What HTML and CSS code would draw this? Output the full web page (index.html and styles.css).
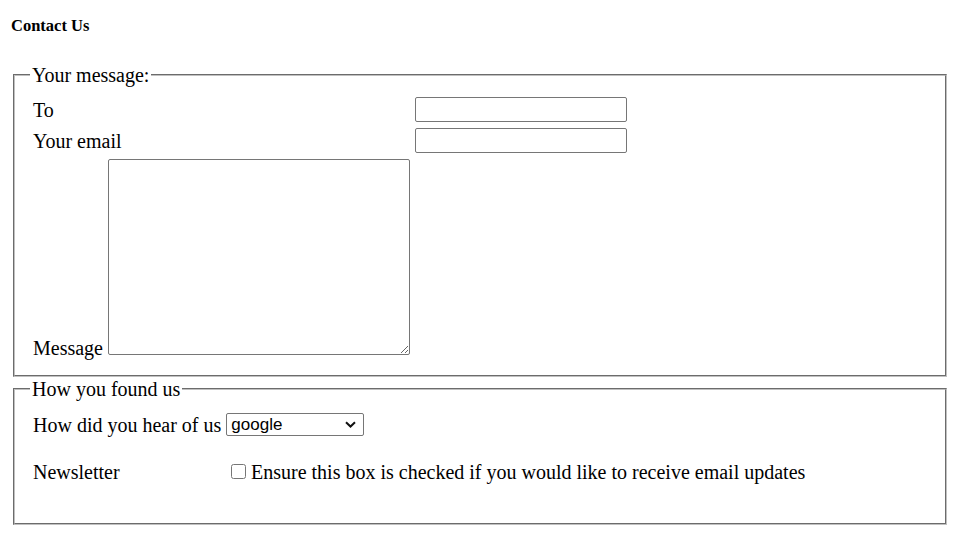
FILE: index.html
```html
<!DOCTYPE html>
<html lang="en">
<head>
<meta charset="utf-8">
<title>Contact Us</title>
<link rel="stylesheet" href="styles.css">
</head>
<body>
<h1 class="title">Contact Us</h1>
<form class="form">
  <fieldset class="group group-message">
    <legend class="legend">Your message:</legend>
    <div class="row">
      <label class="label label-wide" for="to">To</label>
      <input class="text-input" type="text" id="to">
    </div>
    <div class="row">
      <label class="label label-wide" for="email">Your email</label>
      <input class="text-input" type="text" id="email">
    </div>
    <div class="row-inline">
      <label class="label" for="message">Message</label> <textarea class="textarea" id="message"></textarea>
    </div>
  </fieldset>
  <fieldset class="group group-found">
    <legend class="legend">How you found us</legend>
    <div class="row row-select">
      <label class="label" for="hear">How did you hear of us</label>
      <span class="select-wrap">
        <select class="select" id="hear">
          <option>google</option>
          <option>friend</option>
          <option>other</option>
        </select>
        <svg class="chevron" width="11" height="7" viewBox="0 0 11 7" aria-hidden="true"><path d="M1 1.2 L5.5 5.5 L10 1.2" fill="none" stroke="#111" stroke-width="2"/></svg>
      </span>
    </div>
    <div class="row row-news">
      <span class="label label-news">Newsletter</span>
      <input class="checkbox" type="checkbox" id="news">
      <label class="label" for="news">Ensure this box is checked if you would like to receive email updates</label>
    </div>
  </fieldset>
</form>
</body>
</html>
```

FILE: styles.css
```css
html, body {
  margin: 0;
  padding: 0;
  background: #fff;
}

body {
  font-family: "Liberation Serif", "Times New Roman", serif;
  font-size: 20px;
  color: #000;
}

.title {
  font-size: 16.5px;
  font-weight: bold;
  margin: 17px 11px 0;
  line-height: 18px;
}

.form {
  margin: 29px 13px 0;
}

.group {
  margin: 0;
  border: 2px groove rgb(192, 192, 192);
  padding: 0 18px;
  min-width: 0;
}

.group-message {
  padding-top: 11px;
  padding-bottom: 16px;
}

.group-found {
  margin-top: 1px;
  padding-top: 13px;
  padding-bottom: 40px;
}

.legend {
  padding: 0 2px;
  line-height: 22px;
  margin-left: -3px;
}

.row {
  display: flex;
  align-items: center;
}

.row + .row {
  margin-top: 6px;
}

.label {
  line-height: 22px;
}

.label-wide {
  width: 382px;
  flex: none;
}

.text-input {
  width: 212px;
  height: 25px;
  box-sizing: border-box;
  margin: 0;
  border: 1px solid #767676;
  border-radius: 2px;
  font-size: 16px;
}

.row-inline {
  margin-top: 6px;
  line-height: 22px;
}

.textarea {
  width: 302px;
  height: 196px;
  box-sizing: border-box;
  margin: 0;
  border: 1px solid #767676;
  border-radius: 2px;
  vertical-align: baseline;
  font-size: 16px;
}

.row-select {
  height: 23px;
  gap: 5px;
}

.select-wrap {
  position: relative;
  display: inline-flex;
}

.select {
  -webkit-appearance: none;
  appearance: none;
  width: 138px;
  height: 23px;
  box-sizing: border-box;
  margin: 0;
  padding: 0 20px 0 4px;
  font-family: "Liberation Sans", Arial, sans-serif;
  font-size: 17px;
  line-height: 21px;
  border: 1px solid #767676;
  border-radius: 2px;
  background: #fff;
  color: #000;
}

.chevron {
  position: absolute;
  right: 8px;
  top: 8px;
  pointer-events: none;
}

.row-news {
  margin-top: 25px !important;
  height: 22px;
}

.label-news {
  width: 194px;
  flex: none;
}

.checkbox {
  width: 15px;
  height: 15px;
  margin: 0 5px 2px 4px;
  flex: none;
}
```
